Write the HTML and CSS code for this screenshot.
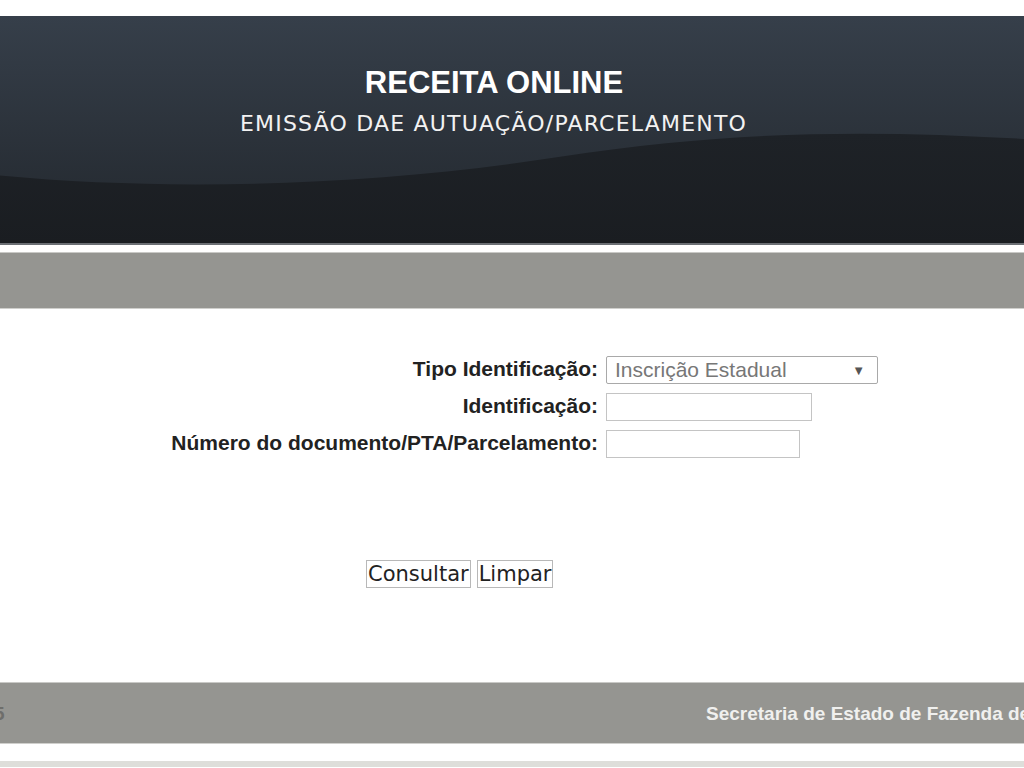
FILE: index.html
```html
<!DOCTYPE html>
<html lang="pt-BR">
<head>
    <meta charset="UTF-8">
    <title>Receita Online - Emissão DAE Autuação/Parcelamento</title>
    <link rel="stylesheet" href="styles.css">
</head>
<body>
    <div class="page">
        <header class="header">
            <svg class="header-wave" viewBox="0 0 1024 229" preserveAspectRatio="none">
                <defs>
                    <linearGradient id="topGrad" x1="0" y1="0" x2="0" y2="1">
                        <stop offset="0" stop-color="#363f4a"/>
                        <stop offset="1" stop-color="#22272d"/>
                    </linearGradient>
                    <linearGradient id="lowGrad" x1="0" y1="0" x2="0" y2="1">
                        <stop offset="0" stop-color="#1e2227"/>
                        <stop offset="1" stop-color="#1a1d21"/>
                    </linearGradient>
                </defs>
                <rect width="1024" height="229" fill="url(#topGrad)"/>
                <path d="M0 161 C 180 178, 380 170, 560 142 S 880 116, 1024 124 L1024 229 L0 229 Z" fill="url(#lowGrad)"/>
            </svg>
            <div class="header-text">
                <h1>RECEITA ONLINE</h1>
                <p>EMISSÃO DAE AUTUAÇÃO/PARCELAMENTO</p>
            </div>
        </header>

        <div class="menu-bar"></div>

        <main class="content">
            <form class="form" onsubmit="return false;">
                <div class="row">
                    <label for="tipo">Tipo Identificação:</label>
                    <div class="select" id="tipo">
                        <span>Inscrição Estadual</span>
                        <span class="arrow">&#9660;</span>
                    </div>
                </div>
                <div class="row">
                    <label for="ident">Identificação:</label>
                    <input type="text" id="ident" class="field field-ident">
                </div>
                <div class="row">
                    <label for="numero">Número do documento/PTA/Parcelamento:</label>
                    <input type="text" id="numero" class="field field-num">
                </div>

                <div class="actions">
                    <button type="submit">Consultar</button>
                    <button type="reset">Limpar</button>
                </div>
            </form>
        </main>

        <footer class="footer">
            <span class="footer-left">© 2015</span>
            <span class="footer-right">Secretaria de Estado de Fazenda de Minas Gerais</span>
        </footer>
        <div class="bottom-line"></div>
    </div>
</body>
</html>
```

FILE: styles.css
```css
* {
    box-sizing: border-box;
    margin: 0;
    padding: 0;
}

html, body {
    overflow: hidden;
}

body {
    font-family: "Liberation Sans", Arial, sans-serif;
    background: #fff;
    color: #222;
    height: 768px;
}

.page {
    padding-top: 16px;
}

.header {
    position: relative;
    height: 229px;
    border-bottom: 2px solid #6b6f74;
}

.header-wave {
    position: absolute;
    top: 0;
    left: 0;
    width: 100%;
    height: 100%;
    display: block;
}

.header-text {
    position: relative;
    text-align: center;
    color: #fff;
    padding-top: 49px;
}

.header-text h1 {
    font-size: 31px;
    font-weight: bold;
    line-height: 36px;
    margin-left: -36px;
}

.header-text p {
    font-family: "DejaVu Sans", Verdana, sans-serif;
    font-size: 22px;
    line-height: 26px;
    letter-spacing: 1.2px;
    margin-top: 10px;
    margin-left: -37px;
    color: #f2f2f2;
}

.menu-bar {
    margin-top: 7px;
    height: 57px;
    background: #959591;
    border-top: 1px solid #c9c9c6;
    border-bottom: 1px solid #cfcfcc;
}

.content {
    height: 373px;
    padding-top: 47px;
}

.form {
    display: flex;
    flex-direction: column;
}

.row {
    display: grid;
    grid-template-columns: 598px auto;
    column-gap: 8px;
    align-items: center;
    height: 28px;
    margin-bottom: 9px;
}

.row label {
    text-align: right;
    font-weight: bold;
    font-size: 21px;
    line-height: 24px;
    margin-top: -2px;
    color: #222;
}

.select {
    width: 272px;
    height: 28px;
    border: 1px solid #a9a9a9;
    border-radius: 2px;
    display: flex;
    justify-content: space-between;
    align-items: center;
    padding: 0 12px 0 8px;
    font-size: 21px;
    color: #777;
}

.select .arrow {
    font-size: 13px;
    color: #555;
}

.field {
    height: 28px;
    border: 1px solid #c4c4c4;
    background: #fff;
}

.field-ident {
    width: 206px;
}

.field-num {
    width: 194px;
}

.actions {
    display: flex;
    gap: 6px;
    margin-top: 93px;
    margin-left: 366px;
}

.actions button {
    font-family: "DejaVu Sans", Verdana, sans-serif;
    font-size: 21px;
    height: 28px;
    padding: 0 1px;
    background: #fff;
    border: 1px solid #b8b8b8;
    color: #222;
}

.footer {
    height: 62px;
    background: #959591;
    border-top: 1px solid #c9c9c6;
    border-bottom: 1px solid #cfcfcc;
    display: flex;
    align-items: center;
    margin-left: -57px;
    padding-top: 2px;
    white-space: nowrap;
}

.footer-left {
    width: 763px;
    flex: none;
    font-size: 19px;
    font-weight: bold;
    color: #6e6e6b;
}

.footer-right {
    flex: none;
    font-size: 19px;
    font-weight: bold;
    color: #f0f0ee;
}

.bottom-line {
    margin-top: 17px;
    height: 6px;
    background: #dededa;
}
```
